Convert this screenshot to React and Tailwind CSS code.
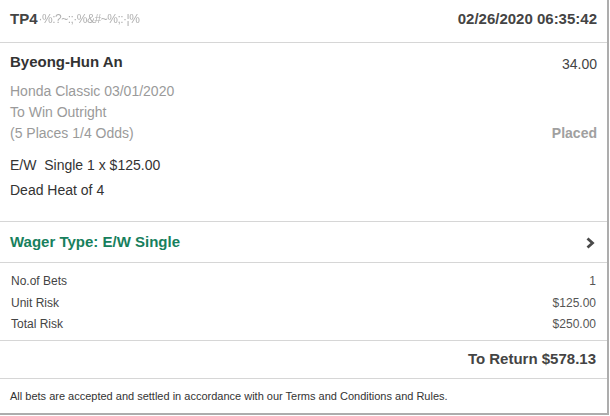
export default function App() {
  const rows = [
    ["No.of Bets", "1"],
    ["Unit Risk", "$125.00"],
    ["Total Risk", "$250.00"],
  ];

  return (
    <div className="w-[610px] h-[416px] bg-white font-['Liberation_Sans',Arial,sans-serif] text-[#333]">
      <div className="w-[609px] h-[415px] border-r-2 border-b-2 border-[#adadad] flex flex-col">
        {/* Header */}
        <div className="h-[43px] shrink-0 flex items-start justify-between pl-[10px] pr-[10px] pt-[10px] border-b border-[#d6d6d6]">
          <div className="flex items-center text-[15px] leading-[18px] font-bold text-[#444]">
            TP4
            <span className="ml-[1px] whitespace-nowrap text-[12px] text-[#b0b0b0] font-normal tracking-[-0.5px] blur-[0.5px]">
              ·%:?~:;·%&#~%;:·¦%
            </span>
          </div>
          <div className="text-[15px] leading-[18px] font-bold text-[#444]">02/26/2020 06:35:42</div>
        </div>

        {/* Selection */}
        <div className="h-[179px] shrink-0 pl-[10px] pr-[10px] pt-[9px] border-b border-[#d6d6d6]">
          <div className="flex justify-between">
            <div className="text-[15px] leading-[20px] font-bold text-[#333]">Byeong-Hun An</div>
            <div className="text-[14px] leading-[20px] mt-[2px] text-[#444]">34.00</div>
          </div>
          <div className="mt-[7px] text-[14px] leading-[21px] text-[#9a9a9a]">
            <div>Honda Classic 03/01/2020</div>
            <div>To Win Outright</div>
            <div className="flex justify-between">
              <span>(5 Places 1/4 Odds)</span>
              <span className="font-bold text-[#a0a0a0]">Placed</span>
            </div>
          </div>
          <div className="mt-[9px] text-[14px] leading-[25px] text-[#333]">
            <div className="whitespace-pre">E/W  Single 1 x $125.00</div>
            <div>Dead Heat of 4</div>
          </div>
        </div>

        {/* Wager type */}
        <div className="h-[41px] shrink-0 flex items-center justify-between pl-[10px] pr-[12px] border-b border-[#d6d6d6]">
          <div className="text-[15px] font-bold text-[#17805d]">Wager Type: E/W Single</div>
          <svg width="10" height="12" viewBox="0 0 10 12" className="mt-[2px]">
            <polyline points="2.5,1.5 7.5,6 2.5,10.5" fill="none" stroke="#4a4a4a" strokeWidth="2.8" />
          </svg>
        </div>

        {/* Summary */}
        <div className="h-[78px] shrink-0 pl-[11px] pr-[11px] pt-[8px] border-b border-[#d6d6d6] text-[12px] leading-[21.5px] text-[#444]">
          {rows.map(([label, value]) => (
            <div key={label} className="flex justify-between">
              <span>{label}</span>
              <span className="text-[#555]">{value}</span>
            </div>
          ))}
        </div>

        {/* Return */}
        <div className="h-[38px] shrink-0 flex items-center justify-end pr-[11px] border-b border-[#d6d6d6]">
          <div className="text-[15px] font-bold text-[#444] mt-[-1px]">To Return $578.13</div>
        </div>

        {/* Footer */}
        <div className="flex-1 flex items-center pl-[10px] text-[11px] text-[#333]">
          All bets are accepted and settled in accordance with our Terms and Conditions and Rules.
        </div>
      </div>
    </div>
  );
}
